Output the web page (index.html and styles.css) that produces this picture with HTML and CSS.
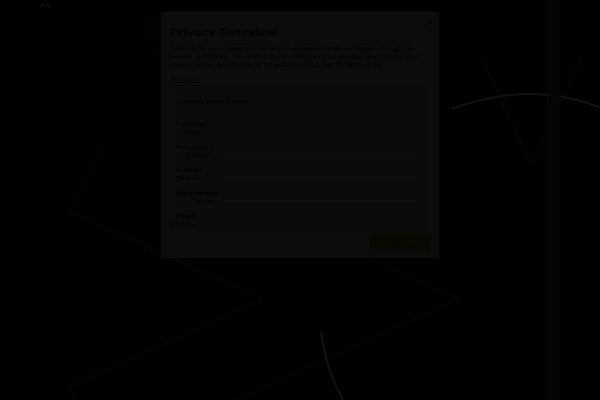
FILE: index.html
```html
<!DOCTYPE html>
<html lang="en">
<head>
<meta charset="utf-8">
<title>Privacy Overview</title>
<link rel="stylesheet" href="styles.css">
</head>
<body>
<svg class="backdrop" viewBox="0 0 600 400" preserveAspectRatio="xMidYMin slice" fill="none" aria-hidden="true">
  <g stroke="#0a0a0a">
    <path d="M105 139 69 211 263 299 69 387 75 400"/>
    <path d="M371 259 458 299 236 400"/>
    <path d="M481 56 531 166 582 56"/>
  </g>
  <path d="M452 109Q529 80 600 107M321 332Q325 367 343 400" stroke="#121212" stroke-width="2"/>
  <path d="M547 0h13v400h-13z" fill="#050505"/>
  <path d="M547 95 560 97" stroke="#0b0b0b"/>
  <path d="M40 8 43 4 45 7 48 4 50 8" stroke="#151515"/>
  <path d="M144 18h16M144 27h16M144 36h16M152 50h8" stroke="#030303" stroke-width="3"/>
</svg>
<main class="modal" role="dialog" aria-labelledby="title">
  <button class="close" aria-label="Close">
    <svg viewBox="0 0 10 10" fill="none" stroke="#000"><path d="M2 8 8 1"/><path d="M6 2h2v2" stroke-width="2"/></svg>
  </button>
  <h1 id="title">Privacy Overview</h1>
  <p class="intro">This website uses cookies to improve your experience while you navigate through the website. Out of these, the cookies that are categorized as necessary are stored on your browser as they are essential for the working of basic functionalities of the ...</p>
  <a class="more" href="#">Show more</a>
  <section class="options">
    <h2 class="necessary">Necessary Always Enabled</h2>
    <div class="row"><a href="#">Functional</a><label class="in-s"><input type="checkbox">Disabled</label></div>
    <div class="row"><a href="#">Performance</a><label class="in-m"><input type="checkbox">Disabled</label></div>
    <div class="row"><a href="#">Analytics</a><label><input type="checkbox">Disabled</label></div>
    <div class="row"><a href="#">Advertisement</a><label class="in-l"><input type="checkbox">Disabled</label></div>
    <div class="row"><a href="#">Others</a><label class="out"><input type="checkbox">Disabled</label></div>
  </section>
  <footer><button class="save">SAVE &amp; ACCEPT</button></footer>
</main>
</body>
</html>
```
FILE: styles.css
```css
* { box-sizing: border-box; }
body {
  margin: 0;
  min-height: 100vh;
  padding-top: 12px;
  background: #000;
  color: #000;
  font: 6px/8px "Liberation Sans", sans-serif;
}
.backdrop {
  position: fixed;
  inset: 0;
  width: 100%;
  height: 100%;
}
.modal {
  position: relative;
  width: 46.4%;
  min-width: 278px;
  margin: 0 auto;
  padding: 14px 7px 7px 8px;
  background: #0c0c0c;
  border: 1px solid #0e0e0e;
}
.close {
  position: absolute;
  top: 6px;
  right: 5px;
  width: 10px;
  height: 10px;
  padding: 0;
  border: 0;
  background: none;
}
.close svg { display: block; }
h1 {
  margin: 0;
  font: 700 11px/12px "DejaVu Sans", sans-serif;
}
.intro {
  margin: 6px 8px 6px 0;
  font-family: Inter, sans-serif;
}
.more {
  display: block;
  width: max-content;
  color: #050505;
}
.options {
  margin-top: 3px;
  padding: 11px 6px 0;
  background: #0b0b0b;
  border-right: 4px solid #0d0d0d;
}
.necessary {
  margin: 0 0 15px;
  font: inherit;
}
.row {
  height: 23px;
}
.row:last-child { height: 19px; }
.row:nth-child(n+3):nth-child(-n+5) {
  background: linear-gradient(#0d0d0d, #0d0d0d) 44px 11px / 100% 1px no-repeat;
}
.row a {
  display: block;
  width: max-content;
  color: inherit;
  font-weight: 700;
  text-decoration: none;
}
.row label { display: block; width: max-content; }
.row input {
  appearance: none;
  position: absolute;
  margin: 0;
}
.in-s { margin-left: 4px; }
.in-m { margin-left: 10px; }
.in-l { margin-left: 16px; }
.out { margin-left: -6px; }
footer {
  display: flex;
  justify-content: flex-end;
  margin-top: 3px;
}
.save {
  width: 61px;
  height: 16px;
  padding: 0;
  border: 0;
  background: #070800;
  color: #0b0c04;
  font: 6px/8px "Liberation Sans", sans-serif;
}
```
